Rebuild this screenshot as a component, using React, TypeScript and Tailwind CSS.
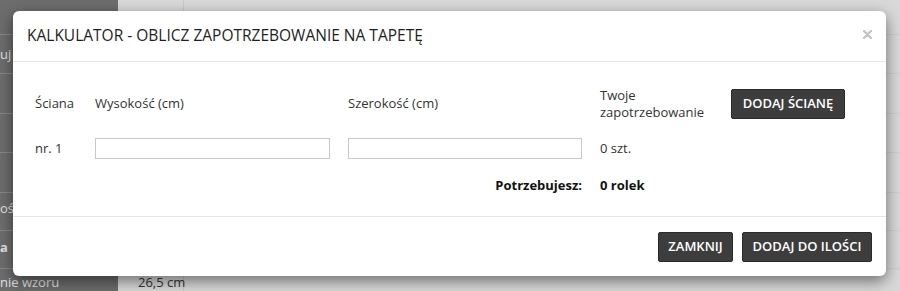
import React from "react";

const font = { fontFamily: '"Open Sans", "Noto Sans", sans-serif' };

const rowLines = [34, 73, 113, 152, 192, 230, 268];

const Backdrop: React.FC = () => {
  return (
    <div className="absolute inset-0 flex">
      <div className="relative w-[118px] bg-[#6d6d6d] text-[13px] text-[#e4e4e4]">
        {rowLines.map((y) => (
          <div key={y} className="absolute left-0 right-0 h-px bg-[#888]" style={{ top: y }} />
        ))}
        <span className="absolute left-0 top-[45px]">uj</span>
        <span className="absolute left-0 top-[199px]">oś</span>
        <span className="absolute left-0 top-[238px] font-bold">a</span>
        <span className="absolute left-0 top-[274px] leading-[16px]">nie wzoru</span>
      </div>
      <div className="relative flex-1 bg-[#d9d9d9] text-[13px] text-[#333]">
        <div className="absolute top-0 bottom-0 left-[65px] w-px bg-[#c9c9c9]" />
        {rowLines.map((y) => (
          <div key={y} className="absolute left-0 right-0 h-px bg-[#cecece]" style={{ top: y }} />
        ))}
        <span className="absolute left-[20px] top-[274px] leading-[16px]">26,5 cm</span>
      </div>
    </div>
  );
};

const DarkButton: React.FC<{ children: React.ReactNode; className?: string }> = ({ children, className }) => (
  <button
    className={
      "h-[30px] rounded-[2px] border border-[#2a2a2a] bg-[#3d3d3d] text-[13px] font-semibold text-white " +
      (className ?? "")
    }
  >
    {children}
  </button>
);

export default function App() {
  return (
    <div className="relative h-[291px] w-[900px] overflow-hidden" style={font}>
      <Backdrop />
      <div className="absolute left-[13px] top-[11px] w-[873px] rounded-[6px] bg-white shadow-[0_5px_15px_rgba(0,0,0,0.5)]">
        <div className="flex h-[51px] items-center justify-between border-b border-[#e5e5e5] pl-[14px] pr-[14px]">
          <h4 className="text-[15.5px] font-medium text-[#1e1e1e]">KALKULATOR - OBLICZ ZAPOTRZEBOWANIE NA TAPETĘ</h4>
          <svg width="9" height="9" viewBox="0 0 9 9" className="mb-[4px]">
            <path d="M1 1 L8 8 M8 1 L1 8" stroke="#c4c4c4" strokeWidth="2.4" strokeLinecap="round" />
          </svg>
        </div>
        <div className="pb-[20px] pl-[22px] pt-[25px] text-[13px] text-[#333]">
          <div className="grid grid-cols-[60px_253px_252px_131px_114px] items-center">
            <span>Ściana</span>
            <span>Wysokość (cm)</span>
            <span>Szerokość (cm)</span>
            <span className="leading-[17px]">
              Twoje
              <br />
              zapotrzebowanie
            </span>
            <DarkButton className="w-[114px]">DODAJ ŚCIANĘ</DarkButton>
          </div>
          <div className="mt-[17px] grid grid-cols-[60px_253px_252px_131px_114px] items-center">
            <span>nr. 1</span>
            <input className="h-[21px] w-[235px] border border-[#c8c8c8] bg-white outline-none" />
            <input className="h-[21px] w-[234px] border border-[#c8c8c8] bg-white outline-none" />
            <span>0 szt.</span>
          </div>
          <div className="mt-[17px] grid grid-cols-[60px_253px_252px_131px_114px] items-center font-bold text-[#111]">
            <span />
            <span />
            <span className="pr-[18px] text-right">Potrzebujesz:</span>
            <span>0 rolek</span>
          </div>
        </div>
        <div className="flex justify-end gap-[9px] border-t border-[#e5e5e5] pb-[14px] pr-[14px] pt-[15px]">
          <DarkButton className="w-[75px]">ZAMKNIJ</DarkButton>
          <DarkButton className="w-[130px]">DODAJ DO ILOŚCI</DarkButton>
        </div>
      </div>
    </div>
  );
}
